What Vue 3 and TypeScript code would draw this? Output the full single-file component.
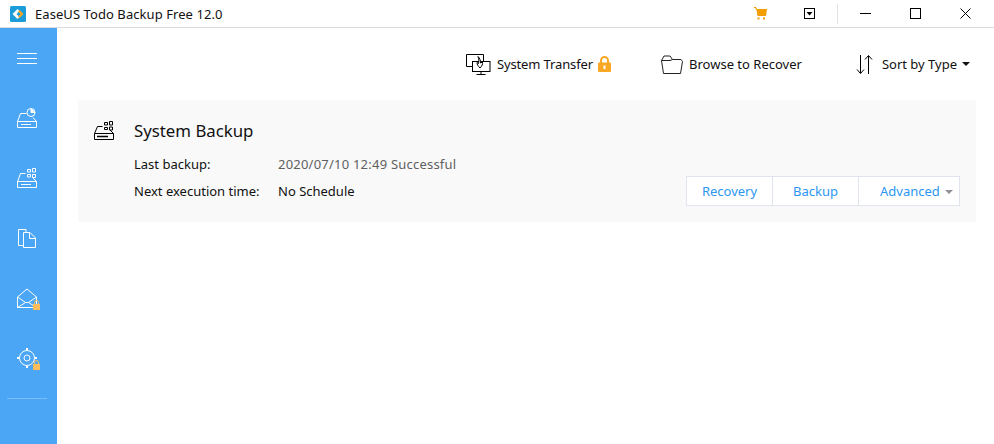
<template>
  <div class="app">
    <header class="titlebar">
      <svg class="logo" width="16" height="16" viewBox="0 0 16 16">
        <rect width="16" height="16" rx="1.500" fill="#1c9cd8" />
        <path d="M7.500 3 2.500 8l5 5 2-2-3-3 3-3z" fill="#fff" />
        <path d="M9.500 4 13.500 8l-4 4-1.500-1.500L10.500 8 8 5.500z" fill="#f7a823" />
      </svg>
      <span class="app-title">{{ appTitle }}</span>
      <div class="win-controls">
        <span class="ctl cart">
          <svg width="13" height="13" viewBox="0 0 13 13">
            <path d="M0 0h2l1 2h10l-1 7H3.500L2.500 3 1 1H0z" fill="#f29f05" />
            <rect x="3.500" y="10.500" width="2" height="2" fill="#f29f05" />
            <rect x="9" y="10.500" width="2" height="2" fill="#f29f05" />
          </svg>
        </span>
        <span class="ctl menu-box">
          <svg width="11" height="11" viewBox="0 0 11 11">
            <rect x="0.500" y="0.500" width="10" height="10" fill="none" stroke="#000" />
            <path d="M2.500 4h6l-3 3.500z" fill="#000" />
          </svg>
        </span>
        <span class="sep"></span>
        <span class="ctl min">
          <svg width="11" height="11" viewBox="0 0 11 11"><path d="M0 5.500h11" stroke="#000" /></svg>
        </span>
        <span class="ctl max">
          <svg width="11" height="11" viewBox="0 0 11 11"><rect x="0.500" y="0.500" width="10" height="10" fill="none" stroke="#000" /></svg>
        </span>
        <span class="ctl close">
          <svg width="11" height="11" viewBox="0 0 11 11"><path d="M0.500 0.500l10 10M10.500 0.500l-10 10" stroke="#000" /></svg>
        </span>
      </div>
    </header>

    <div class="body">
      <aside class="sidebar">
        <button class="side-btn">
          <svg width="20" height="12" viewBox="0 0 20 12">
            <path d="M0 1.500h20M0 6.500h20M0 11.500h20" stroke="#fff" />
          </svg>
        </button>
        <button class="side-btn">
          <svg width="20" height="20" viewBox="0 0 20 20" fill="none" stroke="#fff">
            <path d="M0.500 13.500l3-8h6M16 9.500l3.500 4M0.500 13.500h19v6h-19zM4 16.500h10" />
            <circle cx="14" cy="4.500" r="4" />
            <path d="M14 0.500v4h4z" fill="#fff" />
          </svg>
        </button>
        <button class="side-btn">
          <svg width="20" height="20" viewBox="0 0 20 20" fill="none" stroke="#fff">
            <path d="M0.500 13.500l3-8h5M16 10l3.500 3.500M0.500 13.500h19v6h-19zM4 16.500h10" />
            <path d="M10.500 1.500h3v2.500h-3zM15.500 0.500h3v3.500h-3zM10.500 6.500h3v2.500h-3zM15.500 6.500h3v3h-3z" />
          </svg>
        </button>
        <button class="side-btn">
          <svg width="18" height="19" viewBox="0 0 18 19" fill="none" stroke="#fff">
            <path d="M5.500 16.500h-5v-16h7.500v3" />
            <path d="M5.500 3.500h6.500l5.500 5.500v9.500h-12z" />
            <path d="M11.500 3.500v6h6" />
          </svg>
        </button>
        <button class="side-btn">
          <span class="icon-wrap">
            <svg width="20" height="20" viewBox="0 0 20 20" fill="none" stroke="#fff">
              <path d="M0.500 19.500v-10.500l9.500-8 9.500 8v10.500z" />
              <path d="M0.500 9l8 5.500h3l8-5.500M0.500 19.500l8-5M19.500 19.500l-8-5" />
            </svg>
            <svg class="lock" width="7" height="10" viewBox="0 0 7 10">
              <path d="M1.500 4V2.500a2 2 0 0 1 4 0V4" fill="none" stroke="#fdbd5c" />
              <rect y="4" width="7" height="6" fill="#fdbd5c" />
            </svg>
          </span>
        </button>
        <button class="side-btn">
          <span class="icon-wrap">
            <svg width="20" height="20" viewBox="0 0 20 20" fill="none" stroke="#fff">
              <circle cx="10" cy="10" r="7.500" />
              <circle cx="10" cy="10" r="3" />
              <path d="M10 0v2M10 18v2M0 10h2M18 10h2" stroke-width="2" />
            </svg>
            <svg class="lock" width="7" height="10" viewBox="0 0 7 10">
              <path d="M1.500 4V2.500a2 2 0 0 1 4 0V4" fill="none" stroke="#fdbd5c" />
              <rect y="4" width="7" height="6" fill="#fdbd5c" />
            </svg>
          </span>
        </button>
        <div class="side-line"></div>
      </aside>

      <main class="main">
        <div class="toolbar">
          <div class="tool transfer">
            <svg width="25" height="21" viewBox="0 0 25 21" fill="none" stroke="#000">
              <path d="M6.500 12.500h-6v-12h17v7" />
              <rect x="6.500" y="7.500" width="17.500" height="10" fill="#fff" />
              <path d="M15 17.500v3M10.500 20.500h9" />
              <path d="M12 2.500c2 2 2.500 4 2.500 6.500l2-1c.5 2-.5 4-2.500 6-2-2-3-3.500-3-5.500l1.500 1c.5-2 .5-4-.5-7z" fill="#fff" />
            </svg>
            <span>System Transfer</span>
            <svg class="tool-lock" width="13" height="16" viewBox="0 0 13 16">
              <path d="M3 7V4.500a3.500 3.500 0 0 1 7 0V7" fill="none" stroke="#f9a825" stroke-width="2" />
              <rect y="6.500" width="13" height="9.500" rx="1" fill="#f9a825" />
              <rect x="5.500" y="9.500" width="2" height="3.500" fill="#fff" />
            </svg>
          </div>
          <div class="tool browse">
            <svg width="22" height="19" viewBox="0 0 22 19" fill="none" stroke="#222">
              <path d="M0.500 5.500l2.500-4.500h6l2.500 3.500h8.500l1.500 2-2 12h-17z" />
              <path d="M0.500 5.500h8.500l2.500-1" />
            </svg>
            <span>Browse to Recover</span>
          </div>
          <div class="tool sort">
            <svg width="17" height="19" viewBox="0 0 17 19" fill="none" stroke="#000">
              <path d="M4.500 0v18M1 14.500l3.500 4 3.500-4" />
              <path d="M12.500 19V1M9 4.500l3.500-4 3.500 4" />
            </svg>
            <span>Sort by Type</span>
            <i class="caret dark"></i>
          </div>
        </div>

        <section class="card">
          <div class="card-head">
            <svg width="20" height="19" viewBox="0 0 20 19" fill="none" stroke="#000">
              <path d="M0.500 12.500l3-7h5M16 9l3.500 3.500M0.500 12.500h19v6h-19z" />
              <path d="M3 15.500h11" stroke-width="1.500" />
              <path d="M10.500 1.500h3v2.500h-3zM15.500 0.500h3v3.500h-3zM10.500 6.500h3v2h-3zM15.500 6h3v3h-3z" />
            </svg>
            <h2>System Backup</h2>
          </div>
          <div class="card-foot">
            <dl class="info">
              <template v-for="row in infoRows" :key="row.label">
                <dt>{{ row.label }}</dt>
                <dd :class="row.cls">{{ row.value }}</dd>
              </template>
            </dl>
            <div class="actions">
              <button v-for="a in actions" :key="a" :class="{ advanced: a === 'Advanced' }">
                {{ a }}<i v-if="a === 'Advanced'" class="caret grey"></i>
              </button>
            </div>
          </div>
        </section>
      </main>
    </div>
  </div>
</template>

<script setup lang="ts">
const appTitle = 'EaseUS Todo Backup Free 12.0';

const infoRows = [
  { label: 'Last backup:', value: '2020/07/10 12:49 Successful', cls: 'muted' },
  { label: 'Next execution time:', value: 'No Schedule', cls: '' },
];

const actions = ['Recovery', 'Backup', 'Advanced'];
</script>

<style>
html, body { margin: 0; background: #fff; }
</style>

<style scoped>
.app {
  width: 994px;
  height: 444px;
  display: flex;
  flex-direction: column;
  overflow: hidden;
  font-family: "Noto Sans", "Open Sans", sans-serif;
  font-size: 13px;
  color: #111;
}
.titlebar {
  height: 27px;
  flex: none;
  display: flex;
  align-items: center;
  padding-left: 10px;
  border-bottom: 1px solid #dcdcdc;
}
.app-title { margin-left: 9px; font-size: 13px; letter-spacing: 0.07px; }
.win-controls { margin-left: auto; display: flex; align-items: center; height: 100%; }
.ctl { display: flex; align-items: center; justify-content: center; }
.cart { width: 13px; margin-right: 37px; }
.menu-box { width: 11px; margin-right: 22px; }
.sep { width: 1px; height: 20px; background: #e3e3e3; margin-right: 22px; }
.min { width: 11px; margin-right: 39px; }
.max { width: 11px; margin-right: 39px; }
.close { width: 11px; margin-right: 23px; }

.body { flex: 1; display: flex; min-height: 0; }
.sidebar {
  width: 57px;
  flex: none;
  background: #4ba6f6;
  display: flex;
  flex-direction: column;
  align-items: center;
}
.side-btn {
  width: 57px;
  height: 60px;
  padding: 0 3px 0 0;
  border: none;
  background: none;
  display: flex;
  align-items: center;
  justify-content: center;
}
.icon-wrap { position: relative; display: flex; }
.lock { position: absolute; right: -3px; bottom: -2px; }
.side-line { width: 40px; height: 1px; background: #7bbdf8; margin: 10px 3px 0 0; }

.main { flex: 1; min-width: 0; padding: 0 18px 0 21px; }
.toolbar {
  height: 72px;
  display: flex;
  align-items: center;
  justify-content: flex-end;
  padding-right: 6px;
}
.tool { display: flex; align-items: center; }
.tool span { margin-left: 6px; }
.sort span { margin-left: 9px; }
.transfer { margin-right: 50px; letter-spacing: -0.12px; }
.tool-lock { margin-left: 5px; }
.browse { margin-right: 54px; }
.caret {
  display: inline-block;
  width: 0;
  height: 0;
  border-left: 4px solid transparent;
  border-right: 4px solid transparent;
  margin-left: 5px;
}
.caret.dark { border-top: 4px solid #111; }
.caret.grey { border-top: 4px solid #8f9299; vertical-align: middle; margin-bottom: 2px; }

.card {
  height: 122px;
  box-sizing: border-box;
  background: #f9f9f9;
  padding: 17px 16px 16px 16px;
  display: flex;
  flex-direction: column;
}
.card-head { display: flex; align-items: center; height: 26px; }
.card-head svg { margin-top: 0; }
.card-head h2 {
  margin: 0 0 0 20px;
  font-size: 16.800px;
  font-weight: 400;
}
.card-foot {
  margin-top: auto;
  display: flex;
  align-items: flex-end;
  justify-content: space-between;
}
.info {
  margin: 0 0 6px 40px;
  display: grid;
  grid-template-columns: 144px auto;
  row-gap: 9px;
  line-height: 18px;
}
.info dt, .info dd { margin: 0; }
.muted { color: #5f5f5f; letter-spacing: 0.22px; }

.actions { display: flex; background: #fff; border: 1px solid #dfe4ee; height: 30px; box-sizing: border-box; }
.actions button {
  width: 86px;
  padding: 0;
  border: none;
  border-left: 1px solid #dfe4ee;
  background: none;
  font: inherit;
  color: #2b96f2;
}
.actions button:first-child { border-left: none; width: 85px; }
.actions button.advanced { width: 101px; text-align: left; padding-left: 21px; }
</style>
